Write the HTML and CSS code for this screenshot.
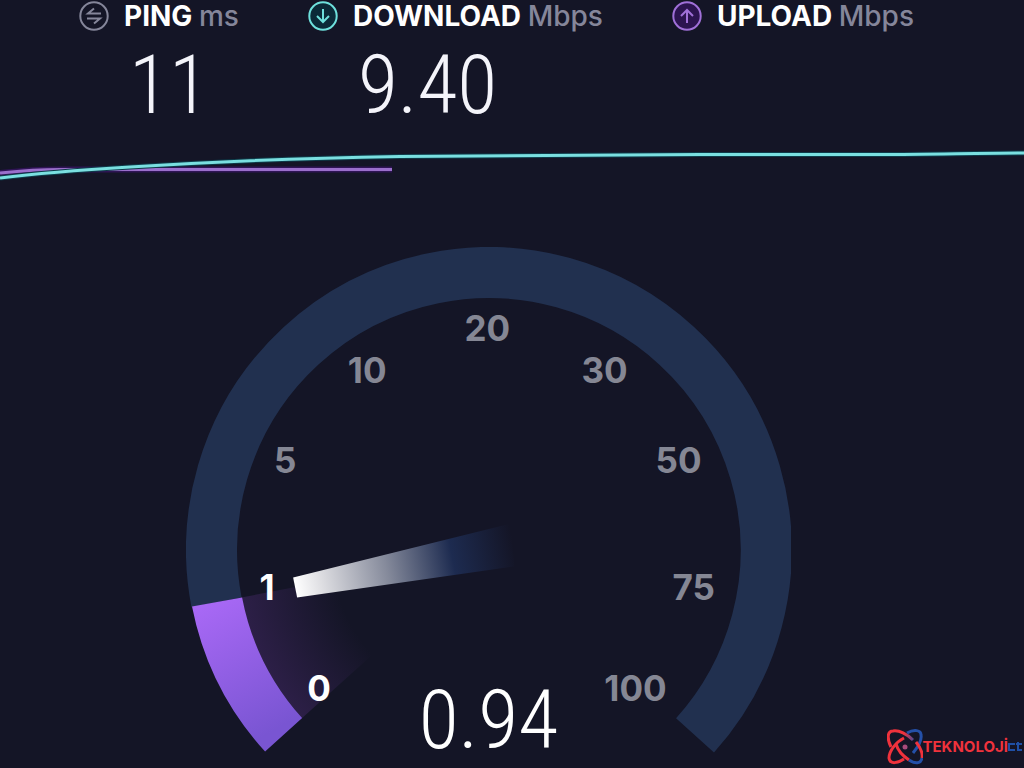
FILE: index.html
```
<!DOCTYPE html>
<html lang="tr">
<head>
  <meta charset="UTF-8">
  <title>Speed Test</title>
  <meta name="viewport" content="width=device-width, initial-scale=1.0">
  <link rel="stylesheet" href="styles.css">
</head>
<body>

  <!-- RESULTS -->
  <header class="results">
    <div class="result ping">
      <svg class="icon" viewBox="0 0 30 30">
        <circle cx="15" cy="15" r="13.7"/>
        <path d="M22 12.500H9L15 7.500M8 17.500H21L15 22.500"/>
      </svg>
      <h2>PING <span>ms</span></h2>
      <p class="value">11</p>
    </div>
    <div class="result download">
      <svg class="icon" viewBox="0 0 30 30">
        <circle cx="15" cy="15" r="13.7"/>
        <path d="M15 8V21M9 15L15 21L21 15"/>
      </svg>
      <h2>DOWNLOAD <span>Mbps</span></h2>
      <p class="value">9.40</p>
    </div>
    <div class="result upload">
      <svg class="icon" viewBox="0 0 30 30">
        <circle cx="15" cy="15" r="13.7"/>
        <path d="M15 22V9M9 15L15 9L21 15"/>
      </svg>
      <h2>UPLOAD <span>Mbps</span></h2>
    </div>
  </header>

  <!-- SPEED LINES -->
  <svg class="chart" viewBox="0 0 1024 40" preserveAspectRatio="none">
    <path class="glow-upload" d="M0 28C20 26 40 24.500 60 24.500H392"/>
    <path class="line-upload" d="M0 28C20 26 40 24.500 60 24.500H392"/>
    <path class="glow-download" d="M0 33C40 28 80 25 130 22C220 16 310 13 400 11.500C500 10 600 9.500 700 9.500L880 9.500C930 9.500 980 8 1024 8"/>
    <path class="line-download" d="M0 33C40 28 80 25 130 22C220 16 310 13 400 11.500C500 10 600 9.500 700 9.500L880 9.500C930 9.500 980 8 1024 8"/>
  </svg>

  <!-- GAUGE -->
  <main class="stage">
    <svg class="gauge" viewBox="0 0 605 521">
      <defs>
        <linearGradient id="fill" x1="0" y1="0" x2="0.400" y2="1">
          <stop offset="0" stop-color="#ac6af8"/>
          <stop offset="1" stop-color="#7955d2"/>
        </linearGradient>
        <radialGradient id="shade" gradientUnits="userSpaceOnUse" cx="302.5" cy="302.5" r="252">
          <stop offset="0.620" stop-color="#7a3fb0" stop-opacity="0"/>
          <stop offset="1" stop-color="#7a3fb0" stop-opacity="0.240"/>
        </radialGradient>
        <linearGradient id="needle" gradientUnits="userSpaceOnUse" x1="109" y1="340" x2="327" y2="298">
          <stop offset="0" stop-color="#ffffff"/>
          <stop offset="0.120" stop-color="#dedee2"/>
          <stop offset="0.420" stop-color="#858a9b"/>
          <stop offset="0.720" stop-color="#1d2b50"/>
          <stop offset="1" stop-color="#141526"/>
        </linearGradient>
      </defs>
      <path class="track" d="M30.500 354.900A277 277 0 1 1 508.400 487.800"/>
      <path fill="url(#shade)" d="M302.500 302.500L55.500 350A251.500 251.500 0 0 0 116 470.500Z"/>
      <path fill="url(#fill)" d="M6 359L56 350A251.500 251.500 0 0 0 116 470.500L79 504A302.500 302.500 0 0 1 6 359Z"/>
      <path fill="url(#needle)" d="M107 330L325 276L328 319L111 350Z"/>
      <g class="ticks">
        <text class="on" x="133" y="453">0</text>
        <text class="on" x="81" y="353">1</text>
        <text x="99" y="226">5</text>
        <text x="181" y="136">10</text>
        <text x="301" y="94">20</text>
        <text x="418" y="136">30</text>
        <text x="492" y="226">50</text>
        <text x="507" y="353">75</text>
        <text x="449" y="453">100</text>
      </g>
      <text class="reading" x="302" y="500">0.94</text>
    </svg>
  </main>

  <!-- SITE LOGO -->
  <div class="logo">
    <svg viewBox="0 0 36 36">
      <defs>
        <linearGradient id="orbit" gradientUnits="userSpaceOnUse" x1="4" y1="14" x2="34" y2="20">
          <stop offset="0.350" stop-color="#f0323c"/>
          <stop offset="0.800" stop-color="#2450a8"/>
        </linearGradient>
      </defs>
      <path stroke="url(#orbit)" d="M4 18C0 10 0 2 6 2C12 1 20 5 26 11"/>
      <path stroke="#2450a8" d="M20 4C27 0 34 1 34 6C35 11 31 18 26 24"/>
      <path stroke="#f0323c" d="M17 9C9 13 2 22 2 29C3 36 11 34 17 30"/>
      <path stroke="#f0323c" d="M9 15C11 22 16 27 22 31"/>
      <path stroke="#f0323c" d="M29 13C33 18 36 24 35 29"/>
      <path stroke="#2450a8" d="M22 31C28 35 34 35 35 29"/>
      <circle cx="18" cy="18" r="2.500" fill="#a84b7c"/>
    </svg>
    <b>TEKNOLOJİ</b>
    <svg class="ct" viewBox="0 0 14 9" role="img" aria-label="ct">
      <path stroke="#1f4fa5" d="M7 2H1V8H7M8 2H14M10 0V8H14"/>
    </svg>
  </div>

</body>
</html>
```
FILE: styles.css
```
* {
  box-sizing: border-box;
}

body {
  margin: 0;
  min-height: 100vh;
  position: relative;
  overflow: hidden;
  font-family: Inter, "Liberation Sans", sans-serif;
  background-color: #141526;
  color: #fff;
}

/* RESULTS */
.results {
  display: flex;
  gap: 69px;
  height: 145px;
  padding-left: 79px;
}

.result {
  display: grid;
  grid-template-columns: 30px auto;
  column-gap: 15px;
  align-content: start;
  white-space: nowrap;
}

.icon {
  width: 30px;
  height: 30px;
  margin-top: 1px;
  fill: none;
  stroke: #85869a;
  stroke-width: 2;
}

.download .icon {
  fill: #0b2a38;
  stroke: #6ee0dc;
}

.upload .icon {
  fill: #2c1450;
  stroke: #a070d8;
}

.icon path {
  fill: none;
}

h2 {
  margin: 0;
  font-size: 28px;
  line-height: 32px;
  font-weight: 650;
}

h2 span {
  color: #85869a;
  font-weight: 500;
}

.value {
  grid-column: 2;
  margin: 0;
  padding-left: 5px;
  font-family: "Roboto Condensed", Roboto, sans-serif;
  font-size: 82px;
  font-weight: 300;
  line-height: 106px;
  color: #f4f4fa;
}

/* SPEED LINES */
.chart {
  display: block;
  width: 100%;
  height: 40px;
  fill: none;
}

.line-upload {
  stroke: #9a6fcb;
  stroke-width: 3;
}

.glow-upload {
  stroke: #2f1455;
  stroke-width: 6;
}

.line-download {
  stroke: #7adfe0;
  stroke-width: 3;
}

.glow-download {
  stroke: #0d3a48;
  stroke-width: 5;
}

/* GAUGE */
.stage {
  display: flex;
  justify-content: center;
  padding: 62px 47px 0 0;
}

.gauge {
  width: 62%;
}

.track {
  fill: none;
  stroke: #21304f;
  stroke-width: 51;
}

.ticks {
  font-size: 35px;
  font-weight: 700;
  fill: #858794;
  text-anchor: middle;
}

.ticks .on {
  fill: #fff;
}

.reading {
  font-family: "Roboto Condensed", Roboto, sans-serif;
  font-size: 82px;
  font-weight: 300;
  fill: #fff;
  text-anchor: middle;
}

/* SITE LOGO */
.logo {
  position: absolute;
  right: 2px;
  bottom: 4px;
  display: flex;
  align-items: center;
  color: #f0323c;
  font-size: 15px;
}

.logo b {
  font-weight: 700;
}

.logo svg {
  width: 36px;
  height: 36px;
  fill: none;
  stroke-width: 3;
}

.logo .ct {
  width: 14px;
  height: 9px;
  stroke-width: 2;
}
```
